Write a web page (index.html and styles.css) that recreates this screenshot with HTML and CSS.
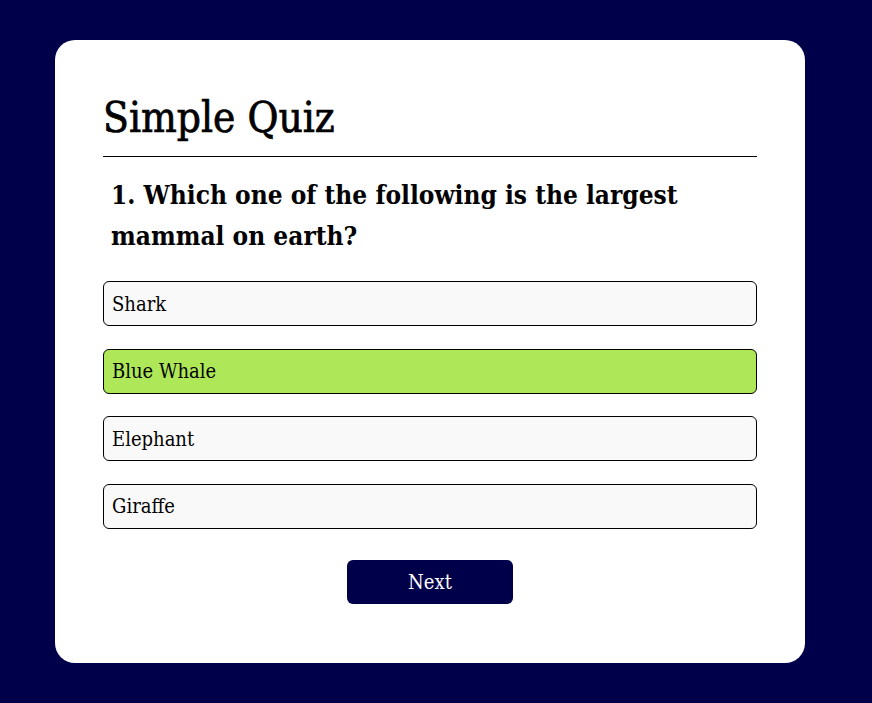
FILE: index.html
```html
<!DOCTYPE html>
<html lang="en">
<head>
<meta charset="utf-8">
<title>Simple Quiz</title>
<link rel="stylesheet" href="styles.css">
</head>
<body>
<div class="page">
  <div class="app">
    <h1 class="title">Simple Quiz</h1>
    <div class="quiz">
      <h2 class="question">1. Which one of the following is the largest mammal on earth?</h2>
      <div class="answers">
        <button class="btn">Shark</button>
        <button class="btn correct">Blue Whale</button>
        <button class="btn">Elephant</button>
        <button class="btn">Giraffe</button>
      </div>
      <button class="next">Next</button>
    </div>
  </div>
</div>
</body>
</html>
```
FILE: styles.css
```css
* { box-sizing: border-box; margin: 0; padding: 0; }
html, body { height: 100%; }
body {
  background: #00004a;
  font-family: "DejaVu Serif Condensed", "DejaVu Serif", serif;
}
.page {
  padding: 40px 0 0 55px;
}
.app {
  width: 750px;
  height: 623px;
  background: #fff;
  border-radius: 20px;
  padding: 48px 48px;
}
.title {
  font-size: 42px;
  font-weight: 400;
  -webkit-text-stroke: 0.7px #000;
  color: #000;
  line-height: 52px;
  padding-top: 4px;
  padding-bottom: 12px;
  border-bottom: 1px solid #000;
}
.question {
  font-size: 26px;
  font-weight: 600;
  line-height: 41px;
  color: #000;
  padding: 18px 8px 0;
}
.answers {
  display: flex;
  flex-direction: column;
  gap: 22.6px;
  margin-top: 24px;
}
.btn {
  display: block;
  width: 100%;
  height: 45px;
  background: #f9f9f9;
  border: 1px solid #000;
  border-radius: 6px;
  font-family: inherit;
  font-size: 20px;
  color: #000;
  text-align: left;
  padding: 0 8px;
}
.btn.correct { background: #aee858; }
.next {
  display: block;
  margin: 31px auto 0;
  width: 166px;
  height: 44px;
  background: #00004a;
  color: #fff;
  border: none;
  border-radius: 6px;
  font-family: inherit;
  font-size: 20px;
}
```
